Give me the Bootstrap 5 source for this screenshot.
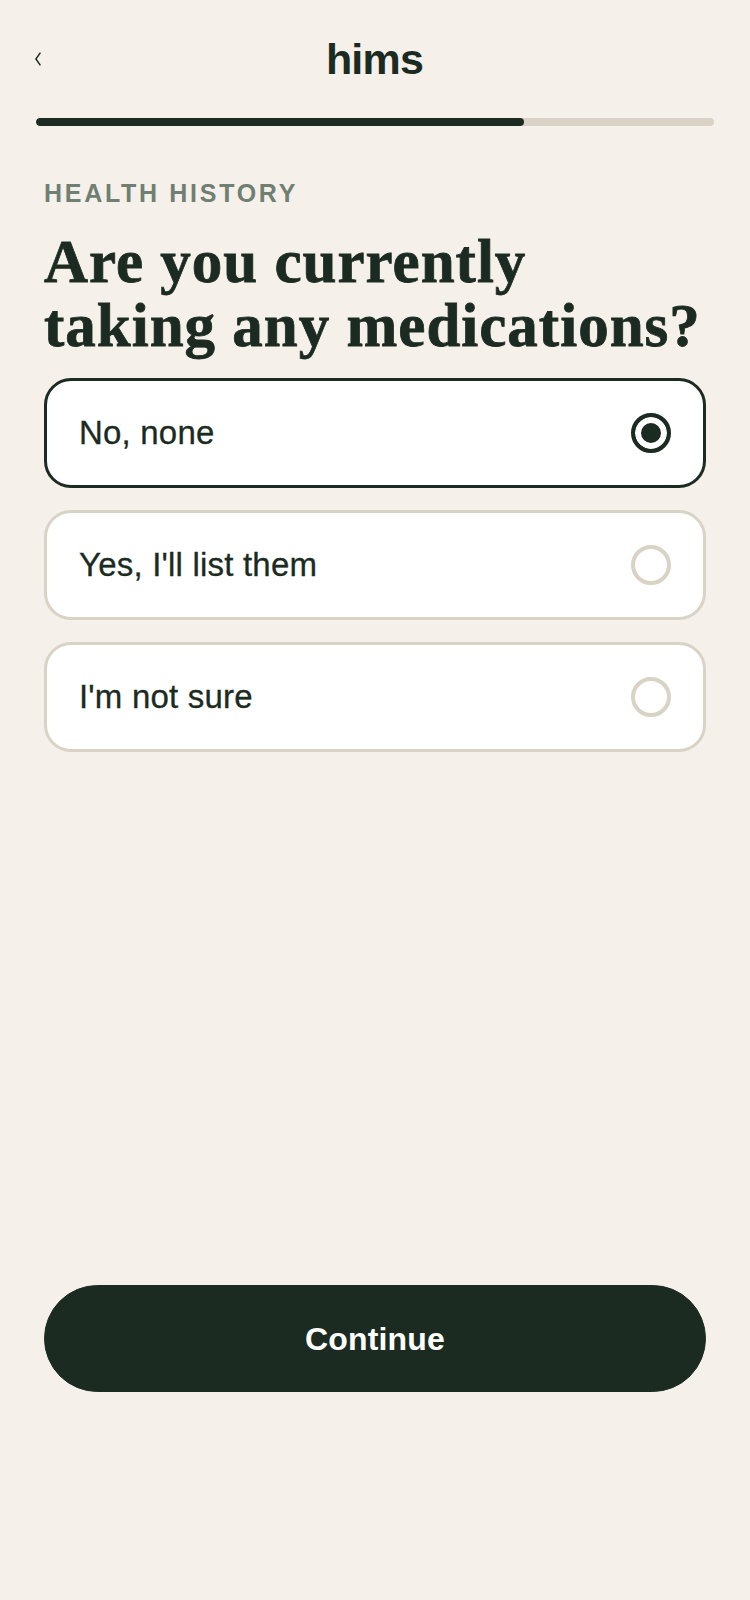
<!DOCTYPE html>
<html lang="en">
<head>
    <meta charset="UTF-8">
    <meta name="viewport" content="width=device-width, initial-scale=1.0">
    <title>hims - Health history</title>
    <link href="https://cdn.jsdelivr.net/npm/bootstrap@5.3.0/dist/css/bootstrap.min.css" rel="stylesheet">
    <style>
        body {
            background: #f5f0e9;
            color: #1c2b22;
            font-family: "Liberation Sans", Arial, sans-serif;
        }
        .screen {
            min-height: 1600px;
            padding: 0 36px 208px;
        }
        .top-bar {
            height: 118px;
        }
        .back-link {
            width: 5px;
            margin-left: -1px;
            line-height: 0;
            color: #1c2b22;
        }
        .brand {
            font-size: 43px;
            font-weight: 700;
            letter-spacing: -.8px;
            line-height: 1;
            color: #1c2b22;
        }
        .back-spacer {
            width: 5px;
        }
        .step-bar {
            height: 8px;
            background: #d9d3c5;
            border-radius: 4px;
        }
        .step-bar .progress-bar {
            background: #1c2b22;
            border-radius: 4px;
        }
        .body-wrap {
            padding: 0 8px;
        }
        .eyebrow {
            margin: 52px 0 0;
            font-size: 25px;
            font-weight: 700;
            line-height: 30px;
            letter-spacing: 2.7px;
            color: #6f7f72;
        }
        .question-title {
            margin: 22px 0 20px;
            font-family: "Liberation Serif", "Times New Roman", serif;
            font-size: 61px;
            font-weight: 700;
            line-height: 64px;
            letter-spacing: 1px;
            -webkit-text-stroke: .8px #1c2b22;
            color: #1c2b22;
        }
        .opt-list {
            gap: 22px;
        }
        .opt-row {
            height: 110px;
            padding: 0 32px;
            background: #fff;
            border: 3px solid #d9d3c5;
            border-radius: 27px;
            font-size: 33px;
            letter-spacing: .2px;
            -webkit-text-stroke: .3px #1c2b22;
            cursor: pointer;
        }
        .opt-row.is-picked {
            border-color: #1c2b22;
        }
        .opt-radio {
            appearance: none;
            flex: none;
            width: 40px;
            height: 40px;
            border: 4px solid #d9d3c5;
            border-radius: 50%;
            background: #fff;
        }
        .opt-radio:checked {
            border-color: #1c2b22;
            background: #1c2b22;
            box-shadow: inset 0 0 0 6px #fff;
        }
        .continue-btn {
            height: 107px;
            background: #1c2b22;
            border-color: #1c2b22;
            border-radius: 54px;
            color: #fff;
            font-size: 32px;
            font-weight: 700;
            letter-spacing: .2px;
        }
    </style>
</head>
<body>
    <div class="screen d-flex flex-column">
        <div class="top-bar d-flex align-items-center justify-content-between">
            <a class="back-link" href="#" aria-label="Back">
                <svg width="6" height="14" viewBox="0 0 6 14" fill="none" stroke="currentColor" stroke-width="1.5"><path d="M5.4 .6 .9 7l4.5 6.4"/></svg>
            </a>
            <div class="brand">hims</div>
            <div class="back-spacer"></div>
        </div>
        <div class="progress step-bar">
            <div class="progress-bar" style="width: 72%"></div>
        </div>
        <div class="body-wrap flex-grow-1 d-flex flex-column">
            <p class="eyebrow">HEALTH HISTORY</p>
            <h1 class="question-title">Are you currently<br>taking any medications?</h1>
            <form class="opt-list d-flex flex-column">
                <label class="opt-row is-picked d-flex align-items-center justify-content-between">
                    No, none
                    <input class="opt-radio" type="radio" name="meds" checked>
                </label>
                <label class="opt-row d-flex align-items-center justify-content-between">
                    Yes, I'll list them
                    <input class="opt-radio" type="radio" name="meds">
                </label>
                <label class="opt-row d-flex align-items-center justify-content-between">
                    I'm not sure
                    <input class="opt-radio" type="radio" name="meds">
                </label>
            </form>
            <button type="button" class="btn continue-btn w-100 mt-auto">Continue</button>
        </div>
    </div>
    <script src="https://cdn.jsdelivr.net/npm/bootstrap@5.3.0/dist/js/bootstrap.bundle.min.js"></script>
    <script>
        document.querySelectorAll(".opt-radio").forEach(radio => {
            radio.addEventListener("change", () => {
                document.querySelectorAll(".opt-row").forEach(row => row.classList.remove("is-picked"));
                radio.closest(".opt-row").classList.add("is-picked");
            });
        });
    </script>
</body>
</html>
